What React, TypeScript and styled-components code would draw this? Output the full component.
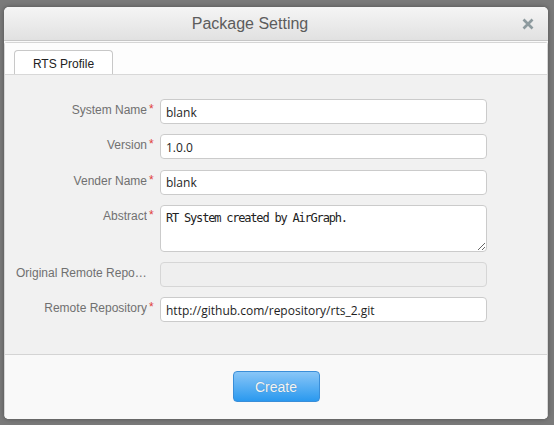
import React from "react";
import styled, { createGlobalStyle } from "styled-components";

const Global = createGlobalStyle`
  html, body { margin: 0; padding: 0; }
  body { background: #7a7a7a; font-family: "Liberation Sans", Arial, sans-serif; }
`;

const Page = styled.div`
  width: 554px;
  height: 425px;
  box-sizing: border-box;
  padding: 7px 6px 6px 4px;
  display: flex;
`;

const Dialog = styled.div`
  flex: 1;
  display: flex;
  flex-direction: column;
  background: #fafafa;
  border-radius: 5px;
  overflow: hidden;
  box-shadow: 0 0 5px rgba(0, 0, 0, 0.35);
`;

const TitleBar = styled.div`
  height: 34px;
  flex: none;
  box-sizing: border-box;
  display: flex;
  align-items: center;
  justify-content: center;
  padding: 0 52px 0 0;
  position: relative;
  background: linear-gradient(#f5f5f5, #e1e1e1);
  border-bottom: 1px solid #c6c6c6;
`;

const Title = styled.div`
  font-size: 16px;
  color: #5c5c5c;
`;

const Close = styled.button`
  position: absolute;
  right: 14px;
  top: 11px;
  width: 12px;
  height: 12px;
  padding: 0;
  border: 0;
  background: none;
  display: flex;
`;

const Body = styled.div`
  flex: 1;
  display: flex;
  flex-direction: column;
  margin-top: 1px;
  border: 1px solid #d6d6d6;
  border-bottom: 0;
  border-radius: 3px 3px 0 0;
  background: #fdfdfd;
`;

const TabStrip = styled.div`
  height: 32px;
  flex: none;
  box-sizing: border-box;
  display: flex;
  align-items: flex-end;
  padding-left: 9px;
  border-bottom: 1px solid #d8d8d8;
  background: #fdfdfd;
`;

const Tab = styled.div`
  width: 99px;
  height: 24px;
  box-sizing: border-box;
  border: 1px solid #c8c8c8;
  border-bottom: 0;
  border-radius: 4px 4px 0 0;
  background: #fff;
  display: flex;
  align-items: center;
  justify-content: center;
  font-size: 12px;
  color: #222;
  padding-top: 2px;
`;

const Panel = styled.div`
  flex: none;
  height: 280px;
  box-sizing: border-box;
  background: #f1f1f1;
  padding: 24px 0 0 11px;
  display: flex;
  flex-direction: column;
  gap: 10.4px;
  border-bottom: 1px solid #d4d4d4;
`;

const Row = styled.div`
  display: flex;
  align-items: flex-start;
`;

const Label = styled.div`
  width: 131px;
  flex: none;
  text-align: right;
  font-size: 12px;
  color: #707070;
  padding-top: 4px;
  white-space: nowrap;
  overflow: hidden;
  text-overflow: ellipsis;
`;

const Star = styled.span<{ $show: boolean }>`
  width: 13px;
  flex: none;
  color: #e0403a;
  font-size: 12px;
  padding: 3px 0 0 2px;
  box-sizing: border-box;
  visibility: ${(p) => (p.$show ? "visible" : "hidden")};
`;

const Input = styled.input`
  width: 327px;
  height: 25px;
  box-sizing: border-box;
  border: 1px solid #cbcbcb;
  border-radius: 4px;
  background: #fff;
  padding: 1px 5px 0;
  font-family: "Open Sans", "DejaVu Sans", sans-serif;
  font-size: 12px;
  color: #1e1e1e;
  outline: none;
  &:disabled {
    background: #efefef;
    border-color: #d6d6d6;
  }
`;

const Area = styled.textarea`
  width: 327px;
  height: 46.5px;
  box-sizing: border-box;
  border: 1px solid #cbcbcb;
  border-radius: 4px;
  background: #fff;
  padding: 5px 5px;
  font-family: "DejaVu Sans Mono", monospace;
  font-size: 12px;
  letter-spacing: -1.2px;
  color: #222;
  outline: none;
  resize: both;
  margin: 0;
`;

const Footer = styled.div`
  flex: 1;
  display: flex;
  justify-content: center;
  align-items: flex-start;
  padding-top: 16px;
  background: #f9f9f9;
`;

const CreateButton = styled.button`
  width: 87px;
  height: 31px;
  border: 1px solid #3a8ed8;
  border-radius: 4px;
  background: linear-gradient(#89c6f7, #2a99ef);
  color: #f4f4f4;
  font-family: "Liberation Sans", Arial, sans-serif;
  font-size: 14px;
  text-shadow: 0 0 1px rgba(0, 0, 0, 0.25);
  padding: 0;
`;

const fields: { label: string; value: string; required: boolean; kind: "input" | "area" | "disabled" }[] = [
  { label: "System Name", value: "blank", required: true, kind: "input" },
  { label: "Version", value: "1.0.0", required: true, kind: "input" },
  { label: "Vender Name", value: "blank", required: true, kind: "input" },
  { label: "Abstract", value: "RT System created by AirGraph.", required: true, kind: "area" },
  { label: "Original Remote Repository", value: "", required: false, kind: "disabled" },
  { label: "Remote Repository", value: "http://github.com/repository/rts_2.git", required: true, kind: "input" },
];

export default function App() {
  return (
    <>
      <Global />
      <Page>
        <Dialog>
          <TitleBar>
            <Title>Package Setting</Title>
            <Close aria-label="close">
              <svg width="12" height="12" viewBox="0 0 12 12">
                <path d="M1.5 1.5 L10.5 10.5 M10.5 1.5 L1.5 10.5" stroke="#8d9a9e" strokeWidth="2.7" strokeLinecap="butt" />
              </svg>
            </Close>
          </TitleBar>
          <Body>
            <TabStrip>
              <Tab>RTS Profile</Tab>
            </TabStrip>
            <Panel>
              {fields.map((f) => (
                <Row key={f.label}>
                  <Label>{f.label}</Label>
                  <Star $show={f.required}>*</Star>
                  {f.kind === "area" ? (
                    <Area defaultValue={f.value} />
                  ) : (
                    <Input defaultValue={f.value} disabled={f.kind === "disabled"} />
                  )}
                </Row>
              ))}
            </Panel>
            <Footer>
              <CreateButton>Create</CreateButton>
            </Footer>
          </Body>
        </Dialog>
      </Page>
    </>
  );
}
